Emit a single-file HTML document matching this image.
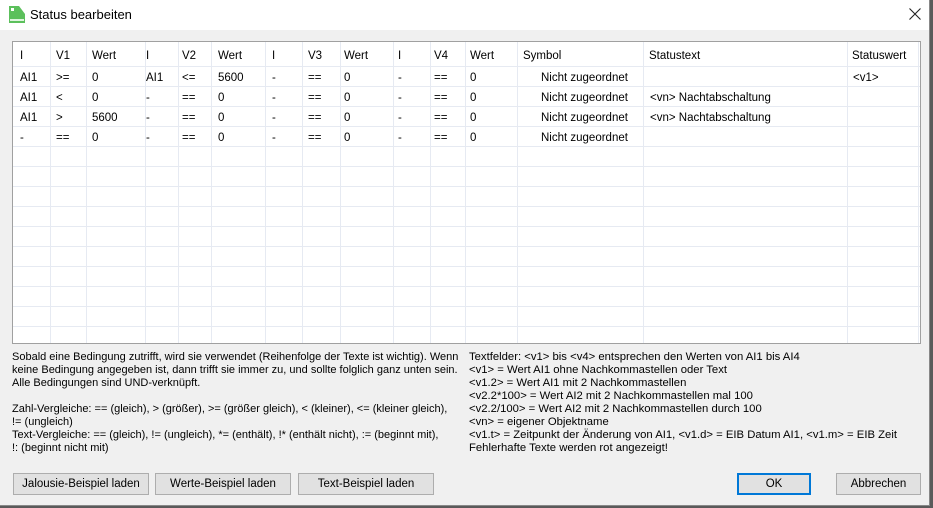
<!DOCTYPE html>
<html><head><style>
body{margin:0;width:933px;height:508px;background:#5a5a5a;position:relative;overflow:hidden;font-family:"Liberation Sans",Tahoma,sans-serif;font-size:12px;color:#000}
#win{position:absolute;left:0;top:0;width:929px;height:505px;background:#f0f0f0;border-right:1px solid #888;border-bottom:1px solid #888}
#title{position:absolute;left:0;top:0;width:929px;height:30px;background:#fff}
#title .t{position:absolute;left:30px;top:7px;font-size:13px}
#grid{position:absolute;left:12px;top:41px;width:907px;height:301px;background:#fff;border:1px solid #a0a0a0;overflow:hidden}
.c{position:absolute;white-space:nowrap;font-size:11.5px}
.vl{position:absolute;top:0;width:1px;height:301px;background:#e6eaf2}
.hl{position:absolute;left:0;width:907px;height:1px;background:#e6eaf2}
.txt{position:absolute;line-height:13px;white-space:nowrap}
.btn{position:absolute;top:473px;height:20px;background:#e1e1e1;border:1px solid #adadad;text-align:center;line-height:20px;font-size:11.5px}
</style></head><body>
<div id="win">
<div id="title">
<svg style="position:absolute;left:9px;top:6px" width="16" height="17"><path d="M0 0H10L16 8V17H0Z" fill="#5cc05c"/><rect x="2" y="2" width="3" height="3" fill="#fff"/><rect x="1" y="13" width="14" height="2" fill="#dff5df"/></svg>
<span class="t">Status bearbeiten</span>
<svg style="position:absolute;left:909px;top:8px" width="12" height="12"><path d="M0.5 0.5L11.5 11.5M11.5 0.5L0.5 11.5" stroke="#222" stroke-width="1.1"/></svg></div>
<div id="grid">
<div class="vl" style="left:37px"></div><div class="vl" style="left:73px"></div><div class="vl" style="left:132px"></div><div class="vl" style="left:165px"></div><div class="vl" style="left:198px"></div><div class="vl" style="left:252px"></div><div class="vl" style="left:289px"></div><div class="vl" style="left:327px"></div><div class="vl" style="left:380px"></div><div class="vl" style="left:417px"></div><div class="vl" style="left:452px"></div><div class="vl" style="left:504px"></div><div class="vl" style="left:630px"></div><div class="vl" style="left:834px"></div><div class="vl" style="left:905px"></div>
<div class="hl" style="top:24px"></div><div class="hl" style="top:44px"></div><div class="hl" style="top:64px"></div><div class="hl" style="top:84px"></div><div class="hl" style="top:104px"></div><div class="hl" style="top:124px"></div><div class="hl" style="top:144px"></div><div class="hl" style="top:164px"></div><div class="hl" style="top:184px"></div><div class="hl" style="top:204px"></div><div class="hl" style="top:224px"></div><div class="hl" style="top:244px"></div><div class="hl" style="top:264px"></div><div class="hl" style="top:284px"></div>
</div>
</div>
<div style="position:absolute;left:0;top:2px">
<div class="c" style="left:20px;top:48px">I</div><div class="c" style="left:56px;top:48px">V1</div><div class="c" style="left:92px;top:48px">Wert</div><div class="c" style="left:146px;top:48px">I</div><div class="c" style="left:182px;top:48px">V2</div><div class="c" style="left:218px;top:48px">Wert</div><div class="c" style="left:272px;top:48px">I</div><div class="c" style="left:308px;top:48px">V3</div><div class="c" style="left:344px;top:48px">Wert</div><div class="c" style="left:398px;top:48px">I</div><div class="c" style="left:434px;top:48px">V4</div><div class="c" style="left:470px;top:48px">Wert</div><div class="c" style="left:523px;top:48px">Symbol</div><div class="c" style="left:649px;top:48px">Statustext</div><div class="c" style="left:852px;top:48px">Statuswert</div>
<div class="c" style="left:20px;top:70px">AI1</div><div class="c" style="left:56px;top:70px">&gt;=</div><div class="c" style="left:92px;top:70px">0</div><div class="c" style="left:146px;top:70px">AI1</div><div class="c" style="left:182px;top:70px">&lt;=</div><div class="c" style="left:218px;top:70px">5600</div><div class="c" style="left:272px;top:70px">-</div><div class="c" style="left:308px;top:70px">==</div><div class="c" style="left:344px;top:70px">0</div><div class="c" style="left:398px;top:70px">-</div><div class="c" style="left:434px;top:70px">==</div><div class="c" style="left:470px;top:70px">0</div><div class="c" style="left:541px;top:70px">Nicht zugeordnet</div><div class="c" style="left:853px;top:70px">&lt;v1&gt;</div>
<div class="c" style="left:20px;top:90px">AI1</div><div class="c" style="left:56px;top:90px">&lt;</div><div class="c" style="left:92px;top:90px">0</div><div class="c" style="left:146px;top:90px">-</div><div class="c" style="left:182px;top:90px">==</div><div class="c" style="left:218px;top:90px">0</div><div class="c" style="left:272px;top:90px">-</div><div class="c" style="left:308px;top:90px">==</div><div class="c" style="left:344px;top:90px">0</div><div class="c" style="left:398px;top:90px">-</div><div class="c" style="left:434px;top:90px">==</div><div class="c" style="left:470px;top:90px">0</div><div class="c" style="left:541px;top:90px">Nicht zugeordnet</div><div class="c" style="left:650px;top:90px">&lt;vn&gt; Nachtabschaltung</div>
<div class="c" style="left:20px;top:110px">AI1</div><div class="c" style="left:56px;top:110px">&gt;</div><div class="c" style="left:92px;top:110px">5600</div><div class="c" style="left:146px;top:110px">-</div><div class="c" style="left:182px;top:110px">==</div><div class="c" style="left:218px;top:110px">0</div><div class="c" style="left:272px;top:110px">-</div><div class="c" style="left:308px;top:110px">==</div><div class="c" style="left:344px;top:110px">0</div><div class="c" style="left:398px;top:110px">-</div><div class="c" style="left:434px;top:110px">==</div><div class="c" style="left:470px;top:110px">0</div><div class="c" style="left:541px;top:110px">Nicht zugeordnet</div><div class="c" style="left:650px;top:110px">&lt;vn&gt; Nachtabschaltung</div>
<div class="c" style="left:20px;top:130px">-</div><div class="c" style="left:56px;top:130px">==</div><div class="c" style="left:92px;top:130px">0</div><div class="c" style="left:146px;top:130px">-</div><div class="c" style="left:182px;top:130px">==</div><div class="c" style="left:218px;top:130px">0</div><div class="c" style="left:272px;top:130px">-</div><div class="c" style="left:308px;top:130px">==</div><div class="c" style="left:344px;top:130px">0</div><div class="c" style="left:398px;top:130px">-</div><div class="c" style="left:434px;top:130px">==</div><div class="c" style="left:470px;top:130px">0</div><div class="c" style="left:541px;top:130px">Nicht zugeordnet</div>
</div>
<div class="txt" style="left:12px;top:351px;font-size:11px">Sobald eine Bedingung zutrifft, wird sie verwendet (Reihenfolge der Texte ist wichtig). Wenn<br>keine Bedingung angegeben ist, dann trifft sie immer zu, und sollte folglich ganz unten sein.<br>Alle Bedingungen sind UND-verknüpft.<br><br>Zahl-Vergleiche: == (gleich), &gt; (größer), &gt;= (größer gleich), &lt; (kleiner), &lt;= (kleiner gleich),<br>!= (ungleich)<br>Text-Vergleiche: == (gleich), != (ungleich), *= (enthält), !* (enthält nicht), := (beginnt mit),<br>!: (beginnt nicht mit)</div>
<div class="txt" style="left:469px;top:351px;font-size:11.3px">Textfelder: &lt;v1&gt; bis &lt;v4&gt; entsprechen den Werten von AI1 bis AI4<br>&lt;v1&gt; = Wert AI1 ohne Nachkommastellen oder Text<br>&lt;v1.2&gt; = Wert AI1 mit 2 Nachkommastellen<br>&lt;v2.2*100&gt; = Wert AI2 mit 2 Nachkommastellen mal 100<br>&lt;v2.2/100&gt; = Wert AI2 mit 2 Nachkommastellen durch 100<br>&lt;vn&gt; = eigener Objektname<br>&lt;v1.t&gt; = Zeitpunkt der Änderung von AI1, &lt;v1.d&gt; = EIB Datum AI1, &lt;v1.m&gt; = EIB Zeit<br>Fehlerhafte Texte werden rot angezeigt!</div>
<div class="btn" style="left:13px;width:134px">Jalousie-Beispiel laden</div>
<div class="btn" style="left:155px;width:134px">Werte-Beispiel laden</div>
<div class="btn" style="left:298px;width:134px">Text-Beispiel laden</div>
<div class="btn" style="left:737px;width:70px;height:18px;line-height:18px;border:2px solid #0078d7">OK</div>
<div class="btn" style="left:836px;width:83px">Abbrechen</div>
</body></html>
